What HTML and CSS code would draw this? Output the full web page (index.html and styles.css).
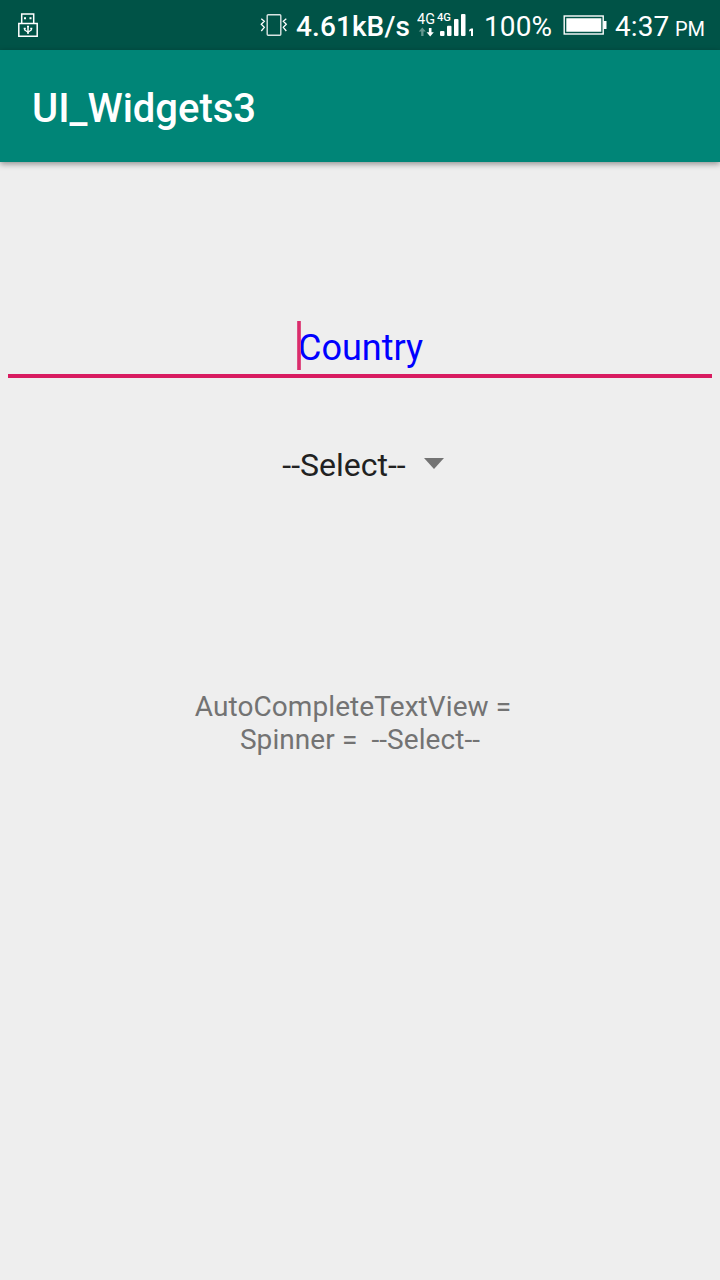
FILE: index.html
```html
<!DOCTYPE html>
<html lang="en">
<head>
<meta charset="utf-8">
<title>UI_Widgets3</title>
<link rel="stylesheet" href="styles.css">
</head>
<body>
<div class="screen">
  <header class="status-bar">
    <svg class="usb" width="22" height="26" viewBox="0 0 22 26" fill="none" stroke="#fff">
      <path d="M4.700 11V2h12V11" stroke-width="1.500"/>
      <path d="M1.800 11.500h18.400v12.700H1.800z" stroke-width="1.500"/>
      <path d="M7 6.200h2M12.500 6.200h2" stroke-width="2"/>
      <path d="M11 14v8" stroke-width="1.500"/>
      <path d="M7.700 16.500v1.500l3.300 2.200 3.300-2.200v-1.500" stroke-width="1.300"/>
      <path d="M6.700 16.500h2M13.300 16.500h2M10 14.500h2" stroke-width="1.500"/>
    </svg>
    <svg class="vibrate" width="28" height="24" viewBox="0 0 28 24" fill="none" stroke="#fff">
      <rect x="7.200" y="1.700" width="13.600" height="20.600" rx="1" stroke-width="1.400" stroke-opacity=".85"/>
      <path d="M1.300 5.800l3 2.500-3 3 3 3-3 3.700M26.300 5.800l-3 2.500 3 3-3 3 3 3.700" stroke-width="1.300"/>
    </svg>
    <span class="speed">4.61kB/s</span>
    <svg class="signal" width="60" height="30" viewBox="0 0 60 30" fill="#fff">
      <text class="network" x="0" y="14" font-size="14.500" textLength="18" lengthAdjust="spacingAndGlyphs">4G</text>
      <text class="network-small" x="20" y="10.700" font-size="10.500" textLength="14" lengthAdjust="spacingAndGlyphs">4G</text>
      <path d="M5.300 17.500l3.500 4H6.500V26H4.200v-4.500H1.800z" opacity=".4"/>
      <path d="M13.200 26.500l3.600-4.300h-2.300V18h-2.600v4.200H9.600z"/>
      <rect x="23" y="21" width="4.500" height="5" rx="1"/>
      <rect x="30" y="15.700" width="4.500" height="10.300" rx="1"/>
      <rect x="37" y="9" width="4.500" height="17" rx="1"/>
      <rect x="44" y="4" width="4.500" height="22" rx="1"/>
      <path d="M54 18.500h2V26h-2v-5.200l-1.800.6v-1.700z"/>
    </svg>
    <span class="percent">100%</span>
    <svg class="battery" width="44" height="20" viewBox="0 0 44 20">
      <rect x="1.200" y="1" width="39" height="18" fill="none" stroke="#fff" stroke-width="1.400"/>
      <path fill="#fff" d="M3.300 3.200h35v13.600h-35zM40.500 6h3v8h-3z"/>
    </svg>
    <span class="clock">4:37</span>
    <span class="meridiem">PM</span>
  </header>
  <div class="app-bar"><h1 class="title">UI_Widgets3</h1></div>
  <main class="content">
    <div class="country-field"><span class="hint"><span class="caret"></span>Country</span></div>
    <div class="spinner">
      <span>--Select--</span>
      <svg width="20" height="11" viewBox="0 0 20 11"><path fill="#737373" d="M0 0h20L10 11z"/></svg>
    </div>
    <div class="result">AutoCompleteTextView =&nbsp;&nbsp;
Spinner =&nbsp; --Select--</div>
  </main>
</div>
</body>
</html>
```
FILE: styles.css
```css
body {
  margin: 0;
  background: #eee;
  font-family: Roboto, sans-serif;
}

.screen {
  display: flex;
  flex-direction: column;
  width: 720px;
  height: 1280px;
  overflow: hidden;
}

.status-bar {
  box-sizing: border-box;
  display: flex;
  align-items: flex-start;
  height: 50px;
  padding-left: 17px;
  background: #005347;
  color: #fff;
  font-size: 28px;
  line-height: 32px;
  white-space: nowrap;
}

.status-bar svg {
  flex: none;
}

.status-bar span {
  flex: none;
  margin-top: 11px;
}

.usb {
  margin-top: 12px;
}

.vibrate {
  margin: 13px 0 0 221px;
}

.status-bar .speed {
  width: 121px;
  margin-left: 8px;
  font-weight: 500;
  letter-spacing: 0.1px;
}

.signal {
  margin-top: 10px;
}

.network,
.network-small {
  font-family: Roboto, sans-serif;
}

.network-small {
  font-weight: 500;
}

.status-bar .percent {
  width: 79px;
  margin-left: 7px;
  letter-spacing: 0.1px;
}

.battery {
  margin-top: 15px;
}

.status-bar .clock {
  width: 60px;
  margin-left: 8px;
  letter-spacing: 0.1px;
}

.status-bar .meridiem {
  margin-top: 13px;
  font-size: 20px;
}

.app-bar {
  display: flex;
  align-items: center;
  height: 112px;
  padding: 0 32px;
  background: #008577;
  box-shadow: 0 2px 6px rgba(0, 0, 0, 0.4);
}

.title {
  margin: 0;
  padding-top: 6px;
  color: #fff;
  font-size: 40px;
  font-weight: 500;
  line-height: 48px;
}

.content {
  display: flex;
  flex-direction: column;
  align-items: center;
  padding: 158px 8px 0;
}

.country-field {
  box-sizing: border-box;
  width: 100%;
  height: 58px;
  padding: 6px 0 0 1px;
  border-bottom: 4px solid #d81b60;
  color: #00f;
  font-size: 36px;
  line-height: 44px;
  text-align: center;
}

.hint {
  position: relative;
}

.caret {
  position: absolute;
  top: -6px;
  left: -1px;
  width: 4px;
  height: 49px;
  background: linear-gradient(90deg, #e0608f, #d81b60 50%, #e0608f);
}

.spinner {
  display: flex;
  align-items: center;
  gap: 18px;
  height: 40px;
  margin: 67px 0 0 6px;
  color: #212121;
  font-size: 32px;
}

.spinner svg {
  margin-bottom: 3px;
}

.result {
  margin-top: 205px;
  color: #737373;
  font-size: 28px;
  letter-spacing: 0.08px;
  line-height: 33px;
  text-align: center;
  white-space: pre-line;
}
```
